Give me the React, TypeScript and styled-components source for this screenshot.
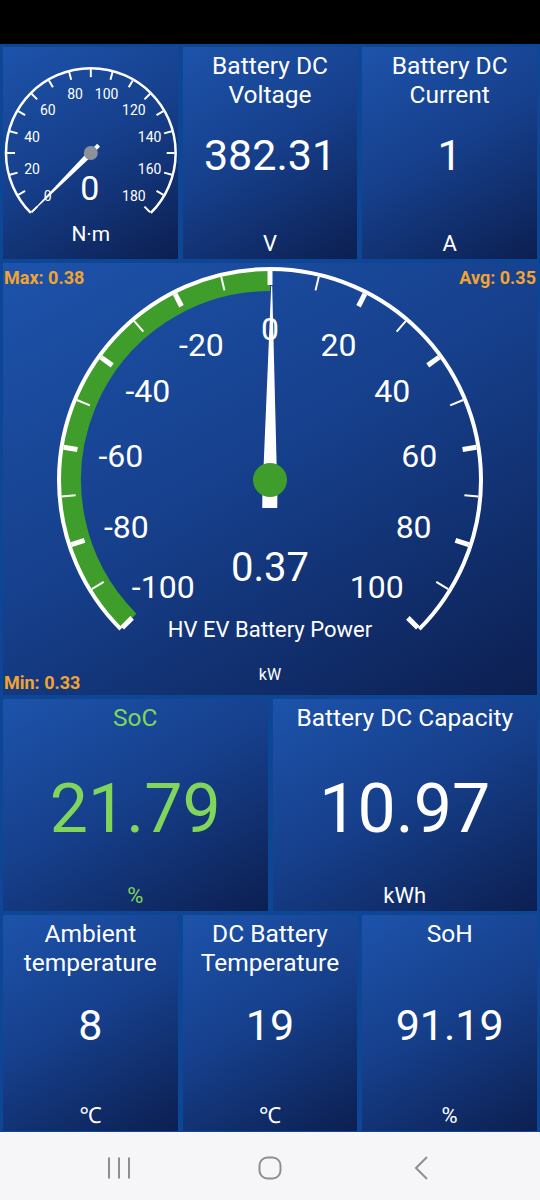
import React from "react";
import styled, { createGlobalStyle } from "styled-components";

const GlobalStyle = createGlobalStyle`
  html, body {
    margin: 0;
    padding: 0;
    background: #000;
  }
  body {
    font-family: Roboto, "Noto Sans", "DejaVu Sans", sans-serif;
  }
`;

// Layout
const Page = styled.div`
  width: 540px;
  height: 1200px;
  display: flex;
  flex-direction: column;
  overflow: hidden;
`;

const StatusBar = styled.div`
  height: 44px;
  flex: none;
  background: #000;
`;

const Dashboard = styled.main`
  height: 1088px;
  flex: none;
  box-sizing: border-box;
  padding: 3px 3px 1px;
  background: #0c4694;
  display: grid;
  grid-template-columns: repeat(6, 1fr);
  grid-template-rows: 212px 432px 212px 1fr;
  gap: 4px 5px;
`;

const Tile = styled.section<{ $span: number }>`
  grid-column: span ${(p) => p.$span};
  display: grid;
  grid-template: 1fr / 1fr;
  min-width: 0;
  min-height: 0;
  color: #fff;
  background: linear-gradient(150deg, #1d53ab 0%, #163f8b 48%, #0c1f51 100%);

  & > * {
    grid-area: 1 / 1;
  }
`;

const Title = styled.div<{ $color?: string }>`
  align-self: start;
  padding-top: 4px;
  text-align: center;
  font-size: 24.5px;
  line-height: 29px;
  color: ${(p) => p.$color || "#fff"};
`;

const Value = styled.div<{ $color?: string; $size: number }>`
  align-self: center;
  padding-top: ${(p) => Math.round(p.$size * 0.1)}px;
  text-align: center;
  font-size: ${(p) => p.$size}px;
  line-height: 1;
  color: ${(p) => p.$color || "#fff"};
`;

const Unit = styled.div<{ $color?: string }>`
  align-self: end;
  padding-bottom: 3px;
  text-align: center;
  font-size: 22px;
  line-height: 24px;
  color: ${(p) => p.$color || "#fff"};
`;

const GaugeSvg = styled.svg`
  width: 100%;
  height: 100%;
  display: block;
`;

const Stat = styled.div<{ $corner: "tl" | "tr" | "bl" }>`
  align-self: ${(p) => (p.$corner === "bl" ? "end" : "start")};
  justify-self: ${(p) => (p.$corner === "tr" ? "end" : "start")};
  padding: ${(p) => (p.$corner === "bl" ? "0 0 1px 1px" : "4px 1px 0")};
  font-size: 18px;
  line-height: 22px;
  font-weight: 700;
  color: #f2a431;
`;

const NavBar = styled.nav`
  flex: 1;
  background: #f6f6f8;
  display: flex;
  justify-content: center;
  align-items: flex-start;
  padding-top: 24px;
  box-sizing: border-box;
`;

const NavSlot = styled.div`
  width: 151px;
  display: flex;
  justify-content: center;
`;

// Helpers
const polar = (cx: number, cy: number, r: number, deg: number): [number, number] => {
  const a = (deg * Math.PI) / 180;
  return [cx + r * Math.sin(a), cy - r * Math.cos(a)];
};

const arc = (cx: number, cy: number, r: number, a0: number, a1: number) => {
  const [x0, y0] = polar(cx, cy, r, a0);
  const [x1, y1] = polar(cx, cy, r, a1);
  const large = a1 - a0 > 180 ? 1 : 0;
  return `M ${x0} ${y0} A ${r} ${r} 0 ${large} 1 ${x1} ${y1}`;
};

const needle = (cx: number, cy: number, deg: number, base: number, tip: number, len: number) => {
  const pts: Array<[number, number]> = [
    polar(cx, cy, base / 2, deg - 90),
    polar(cx, cy, base / 2, deg + 90),
  ];
  const [tx, ty] = polar(cx, cy, len, deg);
  const [ox, oy] = polar(0, 0, tip / 2, deg + 90);
  pts.push([tx + ox, ty + oy], [tx - ox, ty - oy]);
  return pts.map((p) => p.join(",")).join(" ");
};

// Small torque gauge
const TorqueGauge = () => {
  const cx = 88;
  const cy = 106;
  const angle = (v: number) => -135 + v * 1.5;
  const ticks = [];
  const labels = [];
  for (let v = 0; v <= 180; v += 10) {
    const [x0, y0] = polar(cx, cy, 84, angle(v));
    const [x1, y1] = polar(cx, cy, 76, angle(v));
    ticks.push(<line key={v} x1={x0} y1={y0} x2={x1} y2={y1} stroke="#fff" strokeWidth={2} />);
    if (v % 20 === 0) {
      const [lx, ly] = polar(cx, cy, 61, angle(v));
      labels.push(
        <text key={v} x={lx} y={ly} fontSize={14} fill="#fff" textAnchor="middle" dominantBaseline="central">
          {v}
        </text>
      );
    }
  }
  const [sx, sy] = polar(cx, cy, 11, angle(0) + 180);
  return (
    <GaugeSvg viewBox="0 0 175 212">
      <path d={arc(cx, cy, 85, -135, 135)} fill="none" stroke="#fff" strokeWidth={2.5} />
      {ticks}
      {labels}
      <text x={87} y={142} fontSize={34} fill="#fff" textAnchor="middle" dominantBaseline="central">
        0
      </text>
      <text x={88} y={187} fontSize={21} fill="#fff" textAnchor="middle" dominantBaseline="central">
        N·m
      </text>
      <line x1={cx} y1={cy} x2={sx} y2={sy} stroke="#fff" strokeWidth={4} />
      <polygon points={needle(cx, cy, angle(0), 6, 0.8, 84)} fill="#fff" />
      <circle cx={cx} cy={cy} r={7} fill="#8b929c" />
    </GaugeSvg>
  );
};

// Big power gauge
const PowerGauge = ({ value }: { value: number }) => {
  const cx = 267;
  const cy = 217;
  const angle = (v: number) => v * 1.35;
  const ticks = [];
  const labels = [];
  for (let v = -100; v <= 100; v += 10) {
    const major = v % 20 === 0;
    const [x0, y0] = polar(cx, cy, 209, angle(v));
    const [x1, y1] = polar(cx, cy, 195, angle(v));
    ticks.push(
      <line key={v} x1={x0} y1={y0} x2={x1} y2={y1} stroke="#fff" strokeWidth={major ? 5 : 2} />
    );
    if (major) {
      const [lx, ly] = polar(cx, cy, 151, angle(v));
      labels.push(
        <text key={v} x={lx} y={ly} fontSize={32} fill="#fff" textAnchor="middle" dominantBaseline="central">
          {v}
        </text>
      );
    }
  }
  const a = angle(value);
  return (
    <GaugeSvg viewBox="0 0 534 432">
      <path d={arc(cx, cy, 199.5, -135, 0)} fill="none" stroke="#3f9e2b" strokeWidth={21} />
      <path d={arc(cx, cy, 211, -135, 135)} fill="none" stroke="#fff" strokeWidth={4} />
      {ticks}
      {labels}
      <text x={cx} y={304} fontSize={40} fill="#fff" textAnchor="middle" dominantBaseline="central">
        {value.toFixed(2)}
      </text>
      <text x={cx} y={366} fontSize={22} fill="#fff" textAnchor="middle" dominantBaseline="central">
        HV EV Battery Power
      </text>
      <text x={cx} y={411} fontSize={16} fill="#fff" textAnchor="middle" dominantBaseline="central">
        kW
      </text>
      <g transform={`rotate(${a} ${cx} ${cy})`}>
        <rect x={cx - 7.5} y={cy} width={15} height={28} fill="#fff" />
      </g>
      <polygon points={needle(cx, cy, a, 14, 1, 194)} fill="#fff" />
      <circle cx={cx} cy={cy} r={17} fill="#3f9e2b" />
    </GaugeSvg>
  );
};

// Nav icons
const RecentsIcon = () => (
  <svg width="24" height="24" viewBox="0 0 24 24">
    <path d="M2 1.5v21M12 1.5v21M22 1.5v21" stroke="#8e8e8e" strokeWidth={2} fill="none" />
  </svg>
);

const HomeIcon = () => (
  <svg width="24" height="24" viewBox="0 0 24 24">
    <rect x="1.5" y="1.5" width="21" height="21" rx="8" stroke="#8e8e8e" strokeWidth={2} fill="none" />
  </svg>
);

const BackIcon = () => (
  <svg width="24" height="24" viewBox="0 0 24 24">
    <path d="M18 1 L7 12 L18 23" stroke="#8e8e8e" strokeWidth={2} fill="none" />
  </svg>
);

interface Metric {
  title: React.ReactNode;
  value: string;
  unit: string;
  span: number;
  size: number;
  color?: string;
}

const MetricTile = ({ title, value, unit, span, size, color }: Metric) => (
  <Tile $span={span}>
    <Title $color={color}>{title}</Title>
    <Value $size={size} $color={color}>
      {value}
    </Value>
    <Unit $color={color}>{unit}</Unit>
  </Tile>
);

const GREEN = "#7fd65b";

export default function App() {
  return (
    <Page>
      <GlobalStyle />
      <StatusBar />
      <Dashboard>
        <Tile $span={2}>
          <TorqueGauge />
        </Tile>
        <MetricTile title={<>Battery DC<br />Voltage</>} value="382.31" unit="V" span={2} size={43} />
        <MetricTile title={<>Battery DC<br />Current</>} value="1" unit="A" span={2} size={43} />

        <Tile $span={6}>
          <PowerGauge value={0.37} />
          <Stat $corner="tl">Max: 0.38</Stat>
          <Stat $corner="tr">Avg: 0.35</Stat>
          <Stat $corner="bl">Min: 0.33</Stat>
        </Tile>

        <MetricTile title="SoC" value="21.79" unit="%" span={3} size={68} color={GREEN} />
        <MetricTile title="Battery DC Capacity" value="10.97" unit="kWh" span={3} size={68} />

        <MetricTile title={<>Ambient<br />temperature</>} value="8" unit="℃" span={2} size={43} />
        <MetricTile title={<>DC Battery<br />Temperature</>} value="19" unit="℃" span={2} size={43} />
        <MetricTile title="SoH" value="91.19" unit="%" span={2} size={43} />
      </Dashboard>
      <NavBar>
        <NavSlot>
          <RecentsIcon />
        </NavSlot>
        <NavSlot>
          <HomeIcon />
        </NavSlot>
        <NavSlot>
          <BackIcon />
        </NavSlot>
      </NavBar>
    </Page>
  );
}
